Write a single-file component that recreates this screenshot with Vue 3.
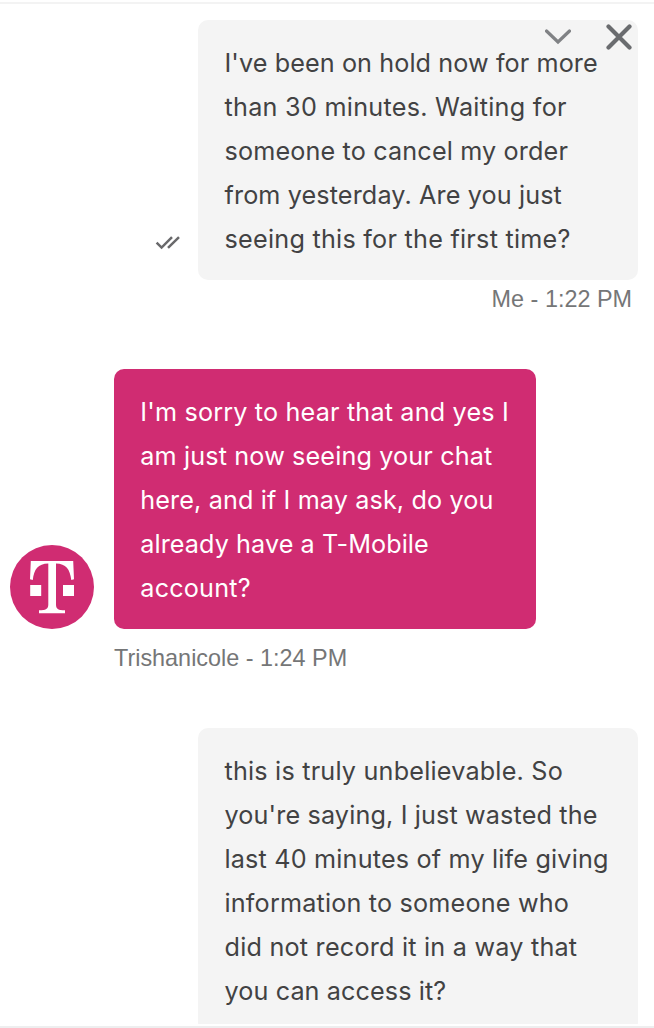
<script setup>
const messages = [
  {
    id: 1,
    side: 'mine',
    lines: [
      { text: "I've been on hold now for more", spacing: 0.09 },
      { text: 'than 30 minutes. Waiting for', spacing: 0.27 },
      { text: 'someone to cancel my order', spacing: 0.15 },
      { text: 'from yesterday. Are you just', spacing: 0.12 },
      { text: 'seeing this for the first time?', spacing: 0.25 }
    ],
    meta: 'Me - 1:22 PM',
    read: true
  },
  {
    id: 2,
    side: 'agent',
    lines: [
      { text: "I'm sorry to hear that and yes I", spacing: 0.17 },
      { text: 'am just now seeing your chat', spacing: 0.14 },
      { text: 'here, and if I may ask, do you', spacing: 0.12 },
      { text: 'already have a T-Mobile', spacing: 0.08 },
      { text: 'account?', spacing: 0.2 }
    ],
    meta: 'Trishanicole - 1:24 PM'
  },
  {
    id: 3,
    side: 'mine',
    lines: [
      { text: 'this is truly unbelievable. So', spacing: 0.2 },
      { text: "you're saying, I just wasted the", spacing: 0.14 },
      { text: 'last 40 minutes of my life giving', spacing: 0.18 },
      { text: 'information to someone who', spacing: 0.18 },
      { text: 'did not record it in a way that', spacing: 0.22 },
      { text: 'you can access it?', spacing: 0.1 }
    ]
  }
]
</script>

<template>
  <div class="chat">
    <main class="thread">
      <section v-for="m in messages" :key="m.id" class="message" :class="m.side">
        <div class="row">
          <svg v-if="m.read" class="read" viewBox="0 0 26 16" width="26" height="16">
            <path d="M1.6 7.6 L6.6 12.600 L17 2.2 M13 12.800 L24 2.2" />
          </svg>
          <svg v-if="m.side === 'agent'" class="avatar" viewBox="0 0 84 84" width="84" height="84">
            <circle cx="42" cy="42" r="42" />
            <path
              class="mark"
              d="M20.800 16H63.200L64 34.200L61.300 35C60 24 56 18.700 46 18.400V59.500C46 64 48 65.300 55 65.300V68.200H29V65.300C36 65.300 38.300 64 38.300 59.500V18.400C28 18.700 24 24 22.800 35L20 34.200Z"
            />
            <path class="mark" d="M20.200 40H31.200V51H20.200ZM53 40H64V51H53Z" />
          </svg>
          <div class="bubble">
            <div v-for="(l, i) in m.lines" :key="i" class="line" :style="{ letterSpacing: l.spacing + 'px' }">{{ l.text }}</div>
          </div>
        </div>
        <div v-if="m.meta" class="meta">{{ m.meta }}</div>
      </section>
    </main>
    <div class="controls">
      <svg viewBox="0 0 26 16" width="26" height="16"><path class="chevron" d="M1.500 2 L13 13 L24.500 2" /></svg>
      <svg viewBox="0 0 26 26" width="26" height="26"><path class="close" d="M2.500 2.500 L23.500 23.500 M23.500 2.500 L2.500 23.500" /></svg>
    </div>
  </div>
</template>

<style>
body {
  background: #fff;
}
</style>

<style scoped>
.chat {
  position: relative;
  box-sizing: border-box;
  width: 654px;
  height: 1028px;
  padding: 2px 0 0;
  border-bottom: 2px solid #eeeeef;
  overflow: hidden;
}
.thread {
  box-sizing: border-box;
  height: 1022px;
  padding: 16px 16px 0 10px;
  border-top: 2px solid #f3f3f3;
  overflow: hidden;
}
.message {
  display: flex;
  flex-direction: column;
}
.message.mine {
  height: 349px;
  align-items: flex-end;
}
.message.agent {
  height: 359px;
}
.row {
  display: flex;
  align-items: flex-end;
}
.bubble {
  box-sizing: border-box;
  width: 440px;
  padding: 21px 26px 19px 26.5px;
  border-radius: 10px;
  background: #f4f4f4;
  color: #424243;
  font: 25.2px/44px Inter, sans-serif;
  white-space: nowrap;
}
.agent .bubble {
  width: 422px;
  margin-left: 20px;
  padding-left: 26.3px;
  background: #d02c72;
  color: #fff;
}
.meta {
  margin: 6px 6px 0 0;
  color: #757677;
  font: 23.4px/26px "Liberation Sans", Arial, sans-serif;
}
.agent .meta {
  margin: 16px 0 0 104px;
}
.read {
  margin: 0 17px 29px 0;
  fill: none;
  stroke: #69696b;
  stroke-width: 2.5;
}
.avatar {
  fill: #d02c72;
}
.mark {
  fill: #fff;
}
.controls {
  position: absolute;
  top: 24px;
  right: 22px;
  display: flex;
  align-items: center;
  gap: 35px;
  filter: blur(0.7px);
}
.controls path {
  fill: none;
  stroke: #6a6c6f;
  stroke-linecap: round;
}
.controls .chevron {
  stroke: #808285;
  stroke-width: 3.2;
}
.controls .close {
  stroke-width: 4.2;
}
</style>
